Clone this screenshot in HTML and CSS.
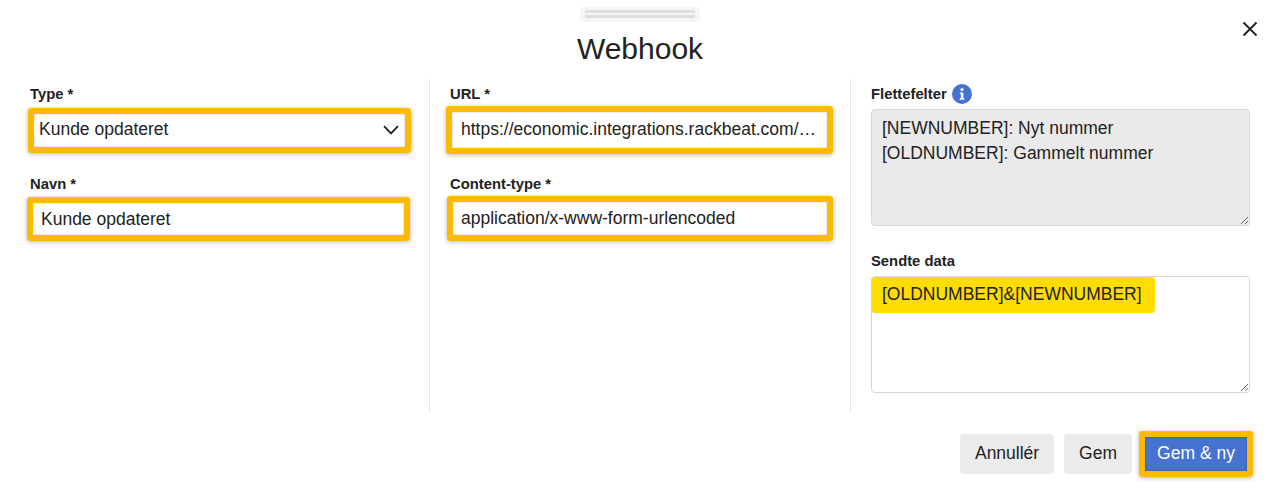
FILE: index.html
```html
<!DOCTYPE html>
<html lang="en">
<head>
  <meta charset="UTF-8">
  <meta name="viewport" content="width=device-width, initial-scale=1.0">
  <title>Webhook</title>
  <link rel="stylesheet" href="styles.css">
</head>
<body>
  <div class="modal">
    <div class="handle"><span></span><span></span></div>
    <h1 class="title">Webhook</h1>
    <button class="close" aria-label="Luk">
      <svg width="16" height="16" viewBox="0 0 16 16"><path d="M1.5 1.5 14.5 14.5M14.5 1.5 1.5 14.5" fill="none" stroke="#222" stroke-width="1.9"/></svg>
    </button>

    <div class="columns">
      <div class="col col-left">
        <label class="label">Type *</label>
        <div class="marked marked-type">
          <select class="control control-select">
            <option>Kunde opdateret</option>
          </select>
          <svg class="chevron" width="16" height="10" viewBox="0 0 16 10"><path d="M1 1.2 8 8.4 15 1.2" fill="none" stroke="#222" stroke-width="1.8"/></svg>
        </div>
        <label class="label label-second">Navn *</label>
        <div class="marked marked-name">
          <input class="control" type="text" value="Kunde opdateret">
        </div>
      </div>

      <div class="col col-middle">
        <label class="label">URL *</label>
        <div class="marked marked-url">
          <input class="control" type="text" value="https://economic.integrations.rackbeat.com/api/webhooks/customer-number">
        </div>
        <label class="label label-content">Content-type *</label>
        <div class="marked marked-content">
          <input class="control" type="text" value="application/x-www-form-urlencoded">
        </div>
      </div>

      <div class="col col-right">
        <label class="label label-info">
          Flettefelter
          <svg width="20" height="20" viewBox="0 0 20 20"><circle cx="10" cy="10" r="10" fill="#4673d1"/><circle cx="10" cy="5.6" r="1.6" fill="#fff"/><path d="M7.9 8.4h3.4v5.7h1v1.6H7.8v-1.6h1.1V10H7.9z" fill="#fff"/></svg>
        </label>
        <textarea class="area area-disabled" readonly>[NEWNUMBER]: Nyt nummer
[OLDNUMBER]: Gammelt nummer</textarea>
        <label class="label label-data">Sendte data</label>
        <div class="area-wrap">
          <div class="yellow"></div>
          <textarea class="area area-data">[OLDNUMBER]&amp;[NEWNUMBER]</textarea>
        </div>
      </div>
    </div>

    <div class="footer">
      <button class="btn btn-cancel">Annullér</button>
      <button class="btn">Gem</button>
      <div class="marked marked-save">
        <button class="btn btn-primary">Gem &amp; ny</button>
      </div>
    </div>
  </div>
</body>
</html>
```

FILE: styles.css
```css
* {
  box-sizing: border-box;
}

body {
  margin: 0;
  background-color: white;
  color: #222;
  font-family: "Liberation Sans", Arial, sans-serif;
}

.modal {
  position: relative;
  width: 1277px;
  height: 501px;
  overflow: hidden;
  background-color: white;
}

.handle {
  display: flex;
  flex-direction: column;
  gap: 2px;
  width: 120px;
  height: 15px;
  margin: 7px 0 0 580px;
  padding: 3px 5px;
  background-color: #f6f6f6;
  border-radius: 5px;
}

.handle span {
  height: 3px;
  background-color: #dedede;
}

.title {
  height: 47px;
  margin: 3px 0 7px;
  padding-left: 3px;
  font-size: 30px;
  font-weight: normal;
  line-height: 47px;
  text-align: center;
}

.close {
  position: absolute;
  top: 21px;
  right: 19px;
  padding: 0;
  border: none;
  background: none;
  line-height: 0;
}

.columns {
  display: grid;
  grid-template-columns: 430px 421px 1fr;
  height: 334px;
}

.col {
  padding-top: 5px;
  border-right: 1px solid #e9e9e9;
}

.col-left {
  padding-left: 30px;
  padding-right: 21px;
}

.col-middle {
  padding-left: 20px;
  padding-right: 19px;
}

.col-right {
  padding-left: 20px;
  padding-right: 27px;
  border-right: none;
}

.label {
  display: block;
  height: 20px;
  font-size: 14.8px;
  font-weight: bold;
  line-height: 20px;
}

.label-second {
  margin-top: 21px;
}

.label-content {
  margin-top: 20px;
}

.label-info {
  display: flex;
  align-items: center;
  gap: 5px;
}

.label-data {
  margin-top: 25px;
}

.marked {
  position: relative;
  border: 6px solid #fdba00;
  border-radius: 3px;
  box-shadow: 0 1px 5px rgba(0, 0, 0, 0.28);
}

.marked-type {
  height: 45px;
  margin: 4px -3px 0 -2px;
}

.marked-name {
  height: 44px;
  margin: 3px -2px 0 -3px;
}

.marked-url {
  height: 48px;
  margin: 2px -2px 0 -4px;
}

.marked-content {
  height: 45px;
  margin: 2px -2px 0 -3px;
}

.marked-save {
  height: 46px;
  margin-left: -3px;
}

.control {
  display: block;
  width: 100%;
  height: 100%;
  border: none;
  outline: none;
  border-radius: 0;
  background-color: white;
  box-shadow: inset 0 0 2px rgba(0, 0, 0, 0.25);
  color: #222;
  font-family: inherit;
  font-size: 17.5px;
  padding: 0 8px;
  text-overflow: ellipsis;
}

.marked-url .control {
  padding: 0 9px 2px;
}

.control-select {
  appearance: none;
  padding: 0 5px 3px;
}

.chevron {
  position: absolute;
  top: 11px;
  right: 6px;
}

.area-wrap {
  position: relative;
  height: 117px;
  margin-top: 5px;
}

.area {
  display: block;
  width: 100%;
  height: 117px;
  margin-top: 5px;
  padding: 6px 10px;
  border: 1px solid #d8d8d8;
  border-radius: 4px;
  outline: none;
  color: #222;
  font-family: inherit;
  font-size: 17.5px;
  line-height: 25px;
}

.area-disabled {
  background-color: #eaeaea;
}

.area-wrap .area {
  position: relative;
  margin-top: 0;
  padding-top: 5px;
  background: transparent;
}

.yellow {
  position: absolute;
  top: 1px;
  left: 0;
  width: 284px;
  height: 36px;
  background-color: #ffdd00;
  border-radius: 4px;
}

.footer {
  display: flex;
  align-items: center;
  justify-content: flex-end;
  gap: 10px;
  margin-top: 18px;
  padding-right: 24px;
}

.btn {
  height: 40px;
  padding: 0 15px 2px;
  border: none;
  border-radius: 4px;
  background-color: #ebebeb;
  color: #222;
  font-family: inherit;
  font-size: 17.5px;
}

.btn-cancel {
  width: 94px;
  padding: 0 0 2px;
}

.btn-primary {
  display: block;
  width: 102px;
  height: 34px;
  padding: 0 0 2px;
  border-radius: 0;
  background-color: #4673d1;
  box-shadow: inset 0 0 2px rgba(0, 0, 0, 0.4);
  color: white;
}
```
